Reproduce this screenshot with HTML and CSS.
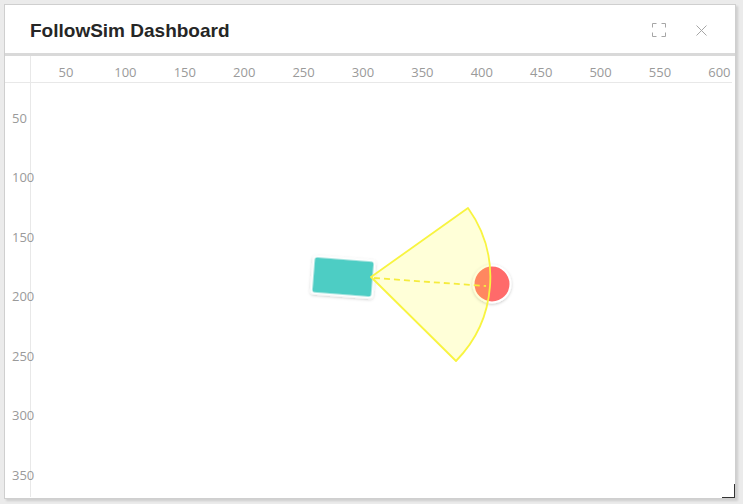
FILE: index.html
```html
<!DOCTYPE html>
<html>
<head>
<meta charset="utf-8">
<title>FollowSim Dashboard</title>
<link rel="stylesheet" href="styles.css">
</head>
<body>
<div class="window">
  <header class="header">
    <h1 class="title">FollowSim Dashboard</h1>
    <div class="actions">
      <button class="icon-btn" aria-label="Fullscreen">
        <svg width="14" height="14" viewBox="0 0 14 14" class="icon">
          <path d="M0.5 4.5V0.5H4.5M9.5 0.5H13.5V4.5M13.5 9.5V13.5H9.5M4.5 13.5H0.5V9.5" fill="none" stroke="#a6a6a6" stroke-width="1"/>
        </svg>
      </button>
      <button class="icon-btn" aria-label="Close">
        <svg width="11" height="11" viewBox="0 0 11 11" class="icon">
          <path d="M0.5 0.5L10.5 10.5M10.5 0.5L0.5 10.5" fill="none" stroke="#a6a6a6" stroke-width="1"/>
        </svg>
      </button>
    </div>
  </header>
  <div class="separator"></div>
  <div class="canvas">
    <svg class="scene" viewBox="5 56 727 441" width="727" height="441">
      <defs>
        <filter id="shadow" x="-30%" y="-30%" width="160%" height="160%">
          <feDropShadow dx="0" dy="1" stdDeviation="1.5" flood-color="#000" flood-opacity="0.22"/>
        </filter>
      </defs>
      <g class="grid">
        <line x1="5" y1="82.5" x2="732" y2="82.5"/>
        <line x1="30.5" y1="56" x2="30.5" y2="497"/>
      </g>
      <g class="ruler-x">
        <text x="66" y="77">50</text>
        <text x="125.4" y="77">100</text>
        <text x="184.8" y="77">150</text>
        <text x="244.2" y="77">200</text>
        <text x="303.6" y="77">250</text>
        <text x="363" y="77">300</text>
        <text x="422.4" y="77">350</text>
        <text x="481.8" y="77">400</text>
        <text x="541.2" y="77">450</text>
        <text x="600.6" y="77">500</text>
        <text x="660" y="77">550</text>
        <text x="719.4" y="77">600</text>
      </g>
      <g class="ruler-y">
        <text x="12" y="122.5">50</text>
        <text x="12" y="182">100</text>
        <text x="12" y="241.5">150</text>
        <text x="12" y="301">200</text>
        <text x="12" y="360.5">250</text>
        <text x="12" y="420">300</text>
        <text x="12" y="479.5">350</text>
      </g>
      <rect class="leader" x="-30.5" y="-18.5" width="61" height="37" rx="3" transform="translate(343 277) rotate(4.5)" filter="url(#shadow)"/>
      <circle class="target" cx="492" cy="284" r="18.5" filter="url(#shadow)"/>
      <path class="cone" d="M371 277 L468 208 A119 119 0 0 1 456 361 Z"/>
      <line class="sight" x1="374" y1="278" x2="486" y2="286"/>
    </svg>
    <div class="resize-handle"></div>
  </div>
</div>
</body>
</html>
```

FILE: styles.css
```css
html, body {
  margin: 0;
  padding: 0;
}
body {
  width: 743px;
  height: 504px;
  background: #ebebeb;
  box-sizing: border-box;
  padding: 4px 7px 5px 4px;
  font-family: "Liberation Sans", Arial, sans-serif;
}
.window {
  width: 732px;
  height: 495px;
  box-sizing: border-box;
  background: #ffffff;
  border: 1px solid #cfcfcf;
  box-shadow: 2px 2px 2px rgba(0, 0, 0, 0.12);
  display: flex;
  flex-direction: column;
}
.header {
  height: 48px;
  flex: none;
  display: flex;
  align-items: center;
  justify-content: space-between;
  padding: 0 28px 0 25px;
}
.title {
  margin: 0;
  font-size: 19px;
  font-weight: bold;
  color: #262626;
  position: relative;
  top: 2px;
}
.actions {
  display: flex;
  align-items: center;
  gap: 30px;
  position: relative;
  top: 1px;
}
.icon-btn {
  background: none;
  border: 0;
  padding: 0;
  margin: 0;
  display: flex;
  align-items: center;
  cursor: pointer;
}
.icon {
  display: block;
}
.separator {
  height: 3px;
  flex: none;
  background: #d9d9d9;
}
.canvas {
  flex: 1;
  position: relative;
  overflow: hidden;
}
.scene {
  display: block;
}
.grid line {
  stroke: #e8e8e8;
  stroke-width: 1;
}
.ruler-x text,
.ruler-y text {
  font-family: "Open Sans", "Noto Sans", sans-serif;
  font-size: 13px;
  fill: #9a9a9a;
}
.ruler-x text {
  text-anchor: middle;
}
.leader {
  fill: #4ecdc4;
  stroke: #ffffff;
  stroke-width: 2;
}
.target {
  fill: #ff6b6b;
  stroke: #ffffff;
  stroke-width: 2;
}
.cone {
  fill: rgba(255, 255, 60, 0.2);
  stroke: #f8f440;
  stroke-width: 1.8;
  stroke-linejoin: round;
}
.sight {
  stroke: #f5ec3c;
  stroke-width: 1.8;
  stroke-dasharray: 6 4;
}
.resize-handle {
  position: absolute;
  right: -1px;
  bottom: -1px;
  width: 12px;
  height: 13px;
  border-right: 2px solid #333333;
  border-bottom: 2px solid #333333;
}
```
